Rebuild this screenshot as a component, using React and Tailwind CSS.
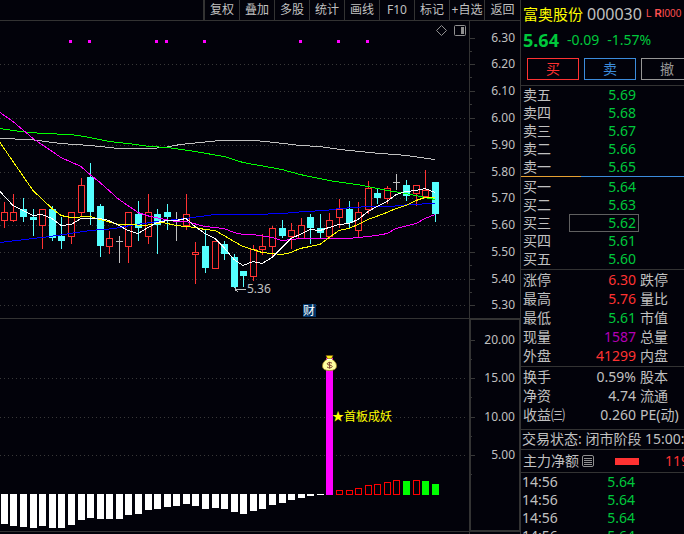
import React from "react";

const tools = ["复权", "叠加", "多股", "统计", "画线", "F10", "标记", "+自选", "返回"];

// [x, high, low, bodyTop, bodyBottom, kind]
const candles = [
  [4, 202, 228, 212, 221, "up"],
  [13, 194, 222, 212, 221, "up"],
  [23, 198, 222, 209, 217, "down"],
  [33, 209, 236, 217, 220, "down"],
  [42, 209, 249, 209, 226, "up"],
  [52, 206, 241, 209, 238, "down"],
  [61, 217, 249, 236, 241, "down"],
  [71, 212, 244, 212, 237, "up"],
  [81, 178, 217, 185, 213, "up"],
  [90, 163, 225, 177, 212, "down"],
  [100, 204, 257, 206, 246, "down"],
  [109, 231, 254, 238, 247, "up"],
  [119, 236, 263, 241, 242, "flat"],
  [128, 212, 263, 212, 247, "up"],
  [138, 201, 241, 214, 228, "down"],
  [148, 194, 244, 212, 237, "up"],
  [157, 209, 254, 214, 225, "down"],
  [167, 204, 230, 212, 217, "down"],
  [176, 212, 241, 220, 221, "flat"],
  [186, 194, 230, 214, 226, "up"],
  [195, 242, 284, 252, 255, "up"],
  [205, 230, 273, 246, 268, "down"],
  [215, 241, 269, 241, 269, "up"],
  [224, 241, 260, 244, 254, "down"],
  [234, 254, 288, 257, 287, "down"],
  [243, 271, 287, 271, 276, "down"],
  [253, 245, 281, 249, 277, "up"],
  [262, 234, 255, 246, 250, "up"],
  [272, 226, 257, 228, 247, "up"],
  [282, 220, 238, 228, 236, "down"],
  [291, 223, 249, 230, 237, "up"],
  [301, 218, 239, 225, 239, "up"],
  [310, 214, 244, 217, 228, "down"],
  [320, 214, 238, 228, 233, "down"],
  [329, 213, 238, 220, 237, "up"],
  [339, 199, 228, 209, 218, "up"],
  [349, 201, 228, 209, 223, "down"],
  [358, 202, 237, 212, 231, "up"],
  [368, 181, 214, 188, 210, "up"],
  [377, 188, 204, 193, 198, "down"],
  [387, 186, 204, 188, 199, "up"],
  [396, 174, 190, 182, 183, "flat"],
  [406, 180, 201, 185, 196, "down"],
  [416, 185, 206, 185, 194, "up"],
  [425, 170, 198, 190, 197, "up"],
  [435, 182, 222, 182, 214, "down"],
];

const averages = [
  {
    color: "#c0c0c0",
    points: "0,138 30,139 61,143 90,145 119,148 150,148 165,147 180,144 200,142 220,140 255,140 275,142 300,145 320,146 340,149 360,151 380,153 396,154 406,155 435,159",
  },
  {
    color: "#00ff00",
    points: "0,128 20,131 42,133 71,134 90,137 109,141 128,143 150,146 167,147 195,151 224,156 243,162 282,169 300,174 329,180 363,185 387,190 406,193 420,196 435,199",
  },
  {
    color: "#0000ff",
    points: "0,242 33,238 50,236 70,233 90,230 115,228 130,225 157,221 186,218 200,216 215,214 255,214 282,213 305,211 325,210 340,208 368,206 390,206 410,204 435,203",
  },
  {
    color: "#ff00ff",
    points: "0,112 13,121 33,138 61,157 81,166 90,174 100,182 119,199 138,212 150,216 176,221 186,221 205,226 224,228 234,232 243,234 253,234 272,237 282,240 301,238 349,238 358,237 377,235 387,233 396,228 416,223 425,218 435,214",
  },
  {
    color: "#ffff00",
    points: "0,142 13,161 33,190 52,208 61,215 71,217 90,216 100,219 119,224 128,224 145,225 163,222 176,225 186,226 195,227 205,229 215,230 224,235 234,241 243,246 253,249 262,252 272,253 282,254 291,252 300,248 310,246 320,244 329,237 339,230 349,228 358,224 368,219 387,212 396,208 406,205 416,200 425,197 435,197",
  },
  {
    color: "#ffffff",
    points: "0,191 13,205 23,210 33,215 42,214 52,218 61,225 71,224 81,218 100,218 109,220 119,225 128,230 138,233 148,227 157,222 167,220 176,220 186,218 195,226 205,233 215,238 224,247 234,259 243,265 253,261 262,263 272,257 282,247 291,238 300,234 310,229 320,230 329,227 339,224 349,223 358,219 368,211 377,206 387,201 396,194 406,191 416,190 425,188 435,192",
  },
];

const signals = [70, 89, 156, 166, 204, 300, 338, 367];

const priceTicks = [
  ["6.30", 38],
  ["6.20", 64],
  ["6.10", 91],
  ["6.00", 118],
  ["5.90", 145],
  ["5.80", 172],
  ["5.70", 198],
  ["5.60", 225],
  ["5.50", 252],
  ["5.40", 279],
  ["5.30", 305],
];

const indicatorTicks = [
  ["20.00", 340],
  ["15.00", 378],
  ["10.00", 417],
  ["5.00", 455],
];

// bars hanging below zero, one per trading day
const negative = [
  30, 32, 33, 34, 32, 34, 34, 31, 26, 24, 25, 25, 25, 21, 20, 16, 15, 13, 12, 10, 12, 15, 14, 15, 18, 20, 17, 15, 11, 9,
  6, 4, 2, 1,
];

const positive = [
  [339, 490, "rise"],
  [349, 490, "rise"],
  [358, 488, "rise"],
  [368, 485, "rise"],
  [377, 484, "rise"],
  [387, 482, "rise"],
  [396, 480, "rise"],
  [406, 481, "fall"],
  [416, 480, "rise"],
  [425, 481, "fall"],
  [435, 484, "fall"],
];

const asks = [
  ["卖五", "5.69"],
  ["卖四", "5.68"],
  ["卖三", "5.67"],
  ["卖二", "5.66"],
  ["卖一", "5.65"],
];

const bids = [
  ["买一", "5.64"],
  ["买二", "5.63"],
  ["买三", "5.62"],
  ["买四", "5.61"],
  ["买五", "5.60"],
];

const dayStats = [
  ["涨停", "6.30", "跌停", "text-[#ff3232]"],
  ["最高", "5.76", "量比", "text-[#ff3232]"],
  ["最低", "5.61", "市值", "text-[#00c83c]"],
  ["现量", "1587", "总量", "text-[#b400b4]"],
  ["外盘", "41299", "内盘", "text-[#ff3232]"],
];

const companyStats = [
  ["换手", "0.59%", "股本", "text-[#c0c0c0]"],
  ["净资", "4.74", "流通", "text-[#c0c0c0]"],
  ["收益㈢", "0.260", "PE(动)", "text-[#c0c0c0]"],
];

const trades = [
  ["14:56", "5.64"],
  ["14:56", "5.64"],
  ["14:56", "5.64"],
  ["14:56", "5.64"],
];

function Candle({ data }) {
  const [x, high, low, top, bottom, kind] = data;
  if (kind === "up") {
    return (
      <g fill="#ff3232">
        {top > high && <rect x={x} y={high} width="1" height={top - high} />}
        {low > bottom && <rect x={x} y={bottom} width="1" height={low - bottom} />}
        <rect x={x - 2.5} y={top + 0.5} width="6" height={bottom - top - 1} fill="#02020a" stroke="#ff3232" />
      </g>
    );
  }
  const color = kind === "down" ? "#54ffff" : "#c0c0c0";
  return (
    <g fill={color}>
      <rect x={x} y={high} width="1" height={low - high} />
      <rect x={x - 3} y={top} width="7" height={bottom - top} />
    </g>
  );
}

function Axis({ ticks, gap }) {
  return (
    <g>
      {ticks.map(([label, y], i) => (
        <g key={label}>
          {i > 0 && <path d={`M0 ${y + 0.5}H466`} stroke="#383838" strokeDasharray="1 3" />}
          <path d={`M470 ${y + 0.5}h5M470 ${y + gap + 0.5}h2`} stroke="#383838" />
          <text x="515" y={y + 4} textAnchor="end" fontSize="12" fill="#c0c0c0">
            {label}
          </text>
        </g>
      ))}
    </g>
  );
}

function PriceChart() {
  return (
    <svg viewBox="0 21 520 298" className="block w-full h-auto" shapeRendering="crispEdges">
      <Axis ticks={priceTicks} gap={13} />
      <path d="M469.5 21V319M0 318.5H520" stroke="#333333" />
      {signals.map((x) => (
        <rect key={x} x={x - 1} y="40" width="3" height="3" fill="#ff00ff" />
      ))}
      <path d="M441.5 25.5l5 5l-5 5l-5 -5z" fill="none" stroke="#909090" shapeRendering="auto" />
      <g shapeRendering="auto">
        <rect x="454.5" y="25.5" width="11" height="10" rx="1" fill="none" stroke="#909090" />
        <rect x="461" y="27" width="3" height="7" fill="#909090" />
      </g>
      {candles.map((c) => (
        <Candle key={c[0]} data={c} />
      ))}
      {averages.map((a) => (
        <polyline key={a.color} points={a.points} fill="none" stroke={a.color} transform="translate(0 0.5)" />
      ))}
      {/* lowest price marker */}
      <path d="M234.5 289.5H246M235.5 287v4M236 290l2 2" stroke="#c0c0c0" fill="none" />
      <text x="247" y="293" fontSize="12" fill="#c0c0c0">
        5.36
      </text>
      <rect x="303" y="304" width="13" height="13" fill="#003468" />
      <text x="303" y="315" fontSize="12" fill="#ffffff">
        财
      </text>
    </svg>
  );
}

function MoneyBag() {
  return (
    <g shapeRendering="auto">
      <path d="M326 355.5h7l-1.5 3.5h-4z" fill="#ffe818" stroke="#7a5a10" strokeWidth="0.7" />
      <path
        d="M327.5 359h4c2.5 1.4 5 3.6 5 6.8c0 3.4-2.6 4.7-7 4.7s-7-1.3-7-4.7c0-3.2 2.5-5.4 5-6.8z"
        fill="#ffffa0"
        stroke="#a08020"
        strokeWidth="0.8"
      />
      <path d="M327 359.5h5" stroke="#ffffff" />
      <path
        d="M332 363.2c-1-1-4.8-1-4.8.7c0 1.8 5 .7 5 2.6c0 1.7-4 1.7-5.2.5M329.6 361.8v6.8"
        fill="none"
        stroke="#804030"
        strokeWidth="1"
      />
    </g>
  );
}

function IndicatorChart() {
  return (
    <svg viewBox="0 319 520 215" className="block w-full h-auto" shapeRendering="crispEdges">
      <Axis ticks={indicatorTicks} gap={19} />
      <path d="M0 531.5H469M469.5 532v2" stroke="#333333" />
      <path d="M469 319.5H520M519.5 319V531" stroke="#333333" />
      <path d="M470 319V531H520" fill="none" stroke="#333333" strokeWidth="2" />
      {negative.map((h, i) => (
        <rect key={i} x={candles[i][0] - 3} y="494" width="7" height={h} fill="#ffffff" />
      ))}
      <rect x="326" y="358" width="7" height="137" fill="#ff00ff" />
      <MoneyBag />
      {positive.map(([x, y, kind]) =>
        kind === "rise" ? (
          <rect key={x} x={x - 2.5} y={y + 0.5} width="6" height={494 - y} fill="none" stroke="#ff0000" />
        ) : (
          <rect key={x} x={x - 3} y={y} width="7" height={495 - y} fill="#00ff00" />
        )
      )}
      <text x="332" y="421" fontSize="12" fill="#ffff00">
        ★首板成妖
      </text>
    </svg>
  );
}

function QuoteTable({ rows, selected }) {
  return (
    <table className="w-full table-fixed border-collapse">
      <tbody>
        {rows.map(([label, price]) => (
          <tr key={label} className="h-[18px]">
            <th className="w-12 p-0 pl-[2px] text-left font-normal">{label}</th>
            <td className="w-[70px] p-0">
              <span
                className={
                  "block h-[18px] border pr-[2px] text-right leading-4 text-[#00c83c] " +
                  (label === selected ? "border-[#606060]" : "border-transparent")
                }
              >
                {price}
              </span>
            </td>
            <td className="p-0"></td>
          </tr>
        ))}
      </tbody>
    </table>
  );
}

function StatsTable({ rows }) {
  return (
    <table className="w-full table-fixed border-collapse whitespace-nowrap">
      <tbody>
        {rows.map(([label, value, next, color]) => (
          <tr key={label} className="h-[19px]">
            <th className="w-12 p-0 pl-[2px] text-left font-normal">{label}</th>
            <td className={"w-[70px] p-0 pr-[3px] text-right " + color}>{value}</td>
            <th className="p-0 pl-px text-left font-normal">{next}</th>
          </tr>
        ))}
      </tbody>
    </table>
  );
}

function QuotePanel() {
  return (
    <aside className="w-41 shrink-0 overflow-hidden border-l border-[#333333] text-[14px] leading-[18px] whitespace-nowrap">
      <div className="flex h-7 items-center gap-1 pl-[2px]">
        <h1 className="text-[15px] text-[#ffff00]">富奥股份</h1>
        <span className="text-[16px]">000030</span>
        <span className="flex gap-[3px] font-['Liberation_Sans',sans-serif] text-[10px] text-[#ff5050]">
          <span>L</span>
          <span>
            <b>R</b>I000
          </span>
        </span>
      </div>
      <div className="flex h-6 items-center gap-2 pl-[2px] text-[#00c83c]">
        <strong className="text-[18px]">5.64</strong>
        <span>-0.09</span>
        <span>-1.57%</span>
      </div>
      <div className="flex gap-[5px] pt-[6px] pb-[5px] pl-[6px]">
        <button className="h-[22px] w-[52px] shrink-0 border border-[#ff3232] text-[#ff3232]">买</button>
        <button className="h-[22px] w-[52px] shrink-0 border border-[#3c8cdc] text-[#3c8cdc]">卖</button>
        <button className="h-[22px] w-[52px] shrink-0 border border-[#969696] text-[#969696]">撤</button>
      </div>

      <div className="border-t border-[#333333]">
        <QuoteTable rows={asks} />
      </div>
      <div className="flex h-px">
        <div className="w-[60px] bg-[#e6a032]"></div>
        <div className="flex-1 bg-[#3c8cdc]"></div>
      </div>
      <div className="pt-px">
        <QuoteTable rows={bids} selected="买三" />
      </div>

      <div className="mt-px border-t border-[#333333] pb-px">
        <StatsTable rows={dayStats} />
      </div>
      <div className="border-t border-[#333333] pb-[5px]">
        <StatsTable rows={companyStats} />
      </div>

      <p className="h-5 border-t border-[#333333] pl-px">交易状态: 闭市阶段 15:00:00</p>
      <div className="flex h-[23px] items-center border-t border-[#333333] pl-[2px]">
        <span>主力净额</span>
        <svg width="13" height="13" viewBox="0 0 13 13" className="ml-[3px] shrink-0" fill="none" stroke="#909090">
          <rect x="0.5" y="0.5" width="11" height="11" rx="1.5" />
          <path d="M2 3.5h8M2 5.5h8M2 7.5h8M2 9.5h8" />
        </svg>
        <span className="ml-5 h-[7px] w-6 shrink-0 bg-[#ff3232]"></span>
        <span className="ml-[26px] text-[#ff3232]">119</span>
      </div>

      <table className="w-full table-fixed border-collapse border-t border-[#333333]">
        <tbody>
          {trades.map(([time, price], i) => (
            <tr key={i} className="h-[18px]">
              <td className="w-12 p-0 pl-px">{time}</td>
              <td className="w-[70px] p-0 pr-1 text-right text-[#00c83c]">{price}</td>
              <td className="p-0"></td>
            </tr>
          ))}
        </tbody>
      </table>
    </aside>
  );
}

export default function App() {
  return (
    <div className="flex h-screen overflow-hidden bg-[#02020a] font-['Noto_Sans','Noto_Sans_CJK_SC',sans-serif] text-[#c0c0c0]">
      <main className="min-w-0 flex-1">
        <nav className="flex h-[21px] justify-end border-b border-[#333333] text-[12px]">
          <div className="flex border-l-2 border-[#333333]">
            {tools.map((tool) => (
              <button
                key={tool}
                className="w-[35px] border-r border-[#333333] whitespace-nowrap last:border-r-0"
              >
                {tool}
              </button>
            ))}
          </div>
        </nav>
        <PriceChart />
        <IndicatorChart />
      </main>
      <QuotePanel />
    </div>
  );
}
